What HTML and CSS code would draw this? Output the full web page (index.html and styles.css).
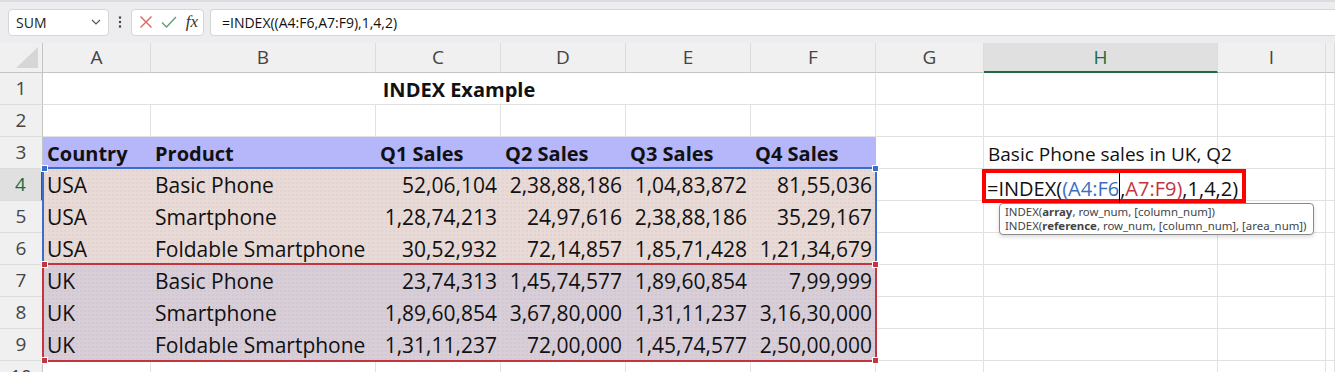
FILE: index.html
```html
<!DOCTYPE html>
<html>
<head>
<meta charset="utf-8">
<title>INDEX Example</title>
<link rel="stylesheet" href="styles.css">
</head>
<body>
<div class="app">
    <div class="toolbar">
        <div class="namebox">
            <span>SUM</span>
            <svg width="10" height="6" viewBox="0 0 10 6"><polyline points="1,1 5,5 9,1" fill="none" stroke="#555" stroke-width="1.2"/></svg>
        </div>
        <div class="more">
            <svg width="4" height="12" viewBox="0 0 4 12"><circle cx="2" cy="1.5" r="1.2" fill="#444"/><circle cx="2" cy="6" r="1.2" fill="#444"/><circle cx="2" cy="10.5" r="1.2" fill="#444"/></svg>
        </div>
        <div class="fxbtns">
            <svg width="14" height="14" viewBox="0 0 14 14"><path d="M1.5 1.5 L12.5 12.5 M12.5 1.5 L1.5 12.5" stroke="#e2625b" stroke-width="1.4" fill="none"/></svg>
            <svg width="16" height="14" viewBox="0 0 16 14"><polyline points="1,7.5 5.5,12 15,2" stroke="#5e9f72" stroke-width="1.4" fill="none"/></svg>
            <span class="fx">fx</span>
        </div>
        <div class="formula">=INDEX((A4:F6,A7:F9),1,4,2)</div>
    </div>

    <div class="sheet" id="sheet">
        <div class="range range-blue">
            <span class="handle tl"></span>
            <span class="handle tr"></span>
        </div>
        <div class="range range-red">
            <span class="handle tl"></span>
            <span class="handle tr"></span>
            <span class="handle bl"></span>
            <span class="handle br"></span>
        </div>
        <div class="editor">=INDEX(<span class="ref-blue">(A4:F6</span><span class="caret"></span>,<span class="ref-red">A7:F9)</span>,1,4,2)</div>
        <div class="tip">
            <div>INDEX(<b>array</b>, row_num, [column_num])</div>
            <div>INDEX(<b>reference</b>, row_num, [column_num], [area_num])</div>
        </div>
    </div>
</div>

<script>
var letters = ['A', 'B', 'C', 'D', 'E', 'F', 'G', 'H', 'I', ''];

var data = {
    3: ['Country', 'Product', 'Q1 Sales', 'Q2 Sales', 'Q3 Sales', 'Q4 Sales'],
    4: ['USA', 'Basic Phone', '52,06,104', '2,38,88,186', '1,04,83,872', '81,55,036'],
    5: ['USA', 'Smartphone', '1,28,74,213', '24,97,616', '2,38,88,186', '35,29,167'],
    6: ['USA', 'Foldable Smartphone', '30,52,932', '72,14,857', '1,85,71,428', '1,21,34,679'],
    7: ['UK', 'Basic Phone', '23,74,313', '1,45,74,577', '1,89,60,854', '7,99,999'],
    8: ['UK', 'Smartphone', '1,89,60,854', '3,67,80,000', '1,31,11,237', '3,16,30,000'],
    9: ['UK', 'Foldable Smartphone', '1,31,11,237', '72,00,000', '1,45,74,577', '2,50,00,000']
};

var sheet = document.getElementById('sheet');

function addCell(text, className) {
    var div = document.createElement('div');
    div.className = className;
    div.textContent = text;
    sheet.appendChild(div);
    return div;
}

// 열 머리글
addCell('', 'corner');
letters.forEach(function(letter) {
    addCell(letter, letter == 'H' ? 'colhead active' : 'colhead');
});

// 행
for (var r = 1; r <= 10; r++) {
    addCell(r, r == 4 ? 'rowhead active' : 'rowhead');

    if (r == 1) {
        addCell('INDEX Example', 'cell title');
        for (var c = 6; c < 10; c++) addCell('', 'cell');
        continue;
    }

    for (var c = 0; c < 10; c++) {
        var cls = 'cell';
        var text = '';
        if (data[r] && c < 6) {
            text = data[r][c];
            if (r == 3) cls += ' head';
            else if (r <= 6) cls += ' fill-usa';
            else cls += ' fill-uk';
            if (r > 3 && c > 1) cls += ' num';
        }
        if (r == 3 && c == 7) {
            text = 'Basic Phone sales in UK, Q2';
            cls += ' note';
        }
        addCell(text, cls);
    }
}
</script>
</body>
</html>
```

FILE: styles.css
```css
body {
    margin: 0;
    font-family: "Open Sans", "Noto Sans", sans-serif;
    color: #111;
    background-color: #fff;
    overflow: hidden;
}

.app {
    width: 1335px;
    height: 372px;
    overflow: hidden;
}

/* 수식 입력줄 */
.toolbar {
    height: 43px;
    box-sizing: border-box;
    display: flex;
    align-items: center;
    padding: 0 0 1px 8px;
    background-color: #ededf0;
    border-top: 2px solid #dcdce0;
}

.namebox, .fxbtns, .formula {
    height: 27px;
    box-sizing: border-box;
    background-color: #fff;
    border: 1px solid #d6d6d8;
    border-radius: 4px;
    display: flex;
    align-items: center;
}

.namebox {
    width: 101px;
    padding: 0 7px 0 7px;
    justify-content: space-between;
    font-size: 14px;
    color: #222;
}

.more {
    width: 22px;
    display: flex;
    justify-content: center;
}

.fxbtns {
    width: 73px;
    padding: 0 5px 0 7px;
    justify-content: space-between;
}

.fx {
    font-family: "Liberation Serif", serif;
    font-style: italic;
    font-size: 17px;
    color: #333;
}

.formula {
    flex: 1;
    margin-left: 6px;
    padding-left: 11px;
    font-size: 14px;
    color: #111;
    border-right: none;
    border-radius: 4px 0 0 4px;
}

/* 시트 */
.sheet {
    position: relative;
    display: grid;
    grid-template-columns: 43px 108px 225px 125px 125px 125px 125px 108px 234px 108px 1fr;
    grid-template-rows: 30px repeat(10, 32px);
}

.corner {
    background-color: #f0f0f0;
    border-right: 1px solid #c4c4c4;
    border-bottom: 1px solid #c4c4c4;
    position: relative;
}

.corner::after {
    content: "";
    position: absolute;
    right: 4px;
    bottom: 4px;
    border-left: 22px solid transparent;
    border-bottom: 21px solid #d6d6d6;
}

.colhead {
    background-color: #f0f0f0;
    border-right: 1px solid #dcdcdc;
    border-bottom: 1px solid #c4c4c4;
    text-align: center;
    font-size: 19px;
    line-height: 29px;
    color: #444;
}

.colhead.active {
    background-color: #e0e0e0;
    color: #1d6b40;
    border-bottom: 2px solid #1d6b40;
}

.rowhead {
    background-color: #f0f0f0;
    border-right: 1px solid #c4c4c4;
    border-bottom: 1px solid #dcdcdc;
    text-align: center;
    font-size: 19px;
    line-height: 31px;
    color: #444;
}

.rowhead.active {
    background-color: #e0e0e0;
    color: #1d6b40;
    border-right: 2px solid #1d6b40;
}

.cell {
    border-right: 1px solid #e1e1e1;
    border-bottom: 1px solid #e1e1e1;
    padding: 0 4px;
    font-size: 21px;
    line-height: 33px;
    white-space: nowrap;
}

.title {
    grid-column: span 6;
    text-align: center;
    font-weight: bold;
    font-size: 20px;
}

.head {
    background-color: #b6b6fa;
    border-color: #b6b6fa;
    font-weight: bold;
    font-size: 20px;
}

.note {
    font-size: 19px;
    line-height: 35px;
}

.fill-usa {
    background-color: #e8dad6;
    background-image: radial-gradient(rgba(150, 110, 110, 0.07) 0.7px, transparent 0.9px);
    background-size: 4px 4px;
    border-color: #e8dad6;
}

.fill-uk {
    background-color: #d8ced8;
    background-image: radial-gradient(rgba(120, 100, 120, 0.07) 0.7px, transparent 0.9px);
    background-size: 4px 4px;
    border-color: #d8ced8;
}

.num {
    text-align: right;
    padding-right: 3px;
}

/* 참조 범위 테두리 */
.range {
    position: absolute;
    left: 42px;
    width: 835px;
    box-sizing: border-box;
    border: 2px solid;
}

.range-blue {
    top: 124px;
    height: 98px;
    border-color: #3a6fc9;
}

.range-red {
    top: 220px;
    height: 99px;
    border-color: #c2363f;
}

.handle {
    position: absolute;
    width: 5px;
    height: 5px;
    border: 1px solid #fff;
}

.range-blue .handle { background-color: #3a6fc9; }
.range-red .handle { background-color: #c2363f; }

.handle.tl { left: -3px; top: -4px; }
.handle.tr { right: -4px; top: -4px; }
.handle.bl { left: -3px; bottom: -4px; }
.handle.br { right: -4px; bottom: -4px; }

/* 편집 중인 셀 */
.editor {
    position: absolute;
    left: 982px;
    top: 126px;
    width: 264px;
    height: 34px;
    box-sizing: border-box;
    border: 4px solid #f00;
    background-color: #fff;
    padding-left: 1px;
    font-size: 20px;
    line-height: 27px;
    white-space: nowrap;
}

.ref-blue { color: #3b6fc6; }
.ref-red { color: #c2363f; }

.caret {
    display: inline-block;
    width: 1px;
    height: 31px;
    margin-bottom: -8px;
    background-color: #000;
}

.tip {
    position: absolute;
    left: 999px;
    top: 160px;
    width: 315px;
    height: 32px;
    box-sizing: border-box;
    padding: 1px 5px;
    background-color: #fff;
    border: 1px solid #8a8a8a;
    border-radius: 4px;
    box-shadow: 0 2px 4px rgba(0, 0, 0, 0.15);
    font-family: "Noto Sans", sans-serif;
    font-size: 11.4px;
    line-height: 14px;
    color: #444;
    white-space: nowrap;
}
```
